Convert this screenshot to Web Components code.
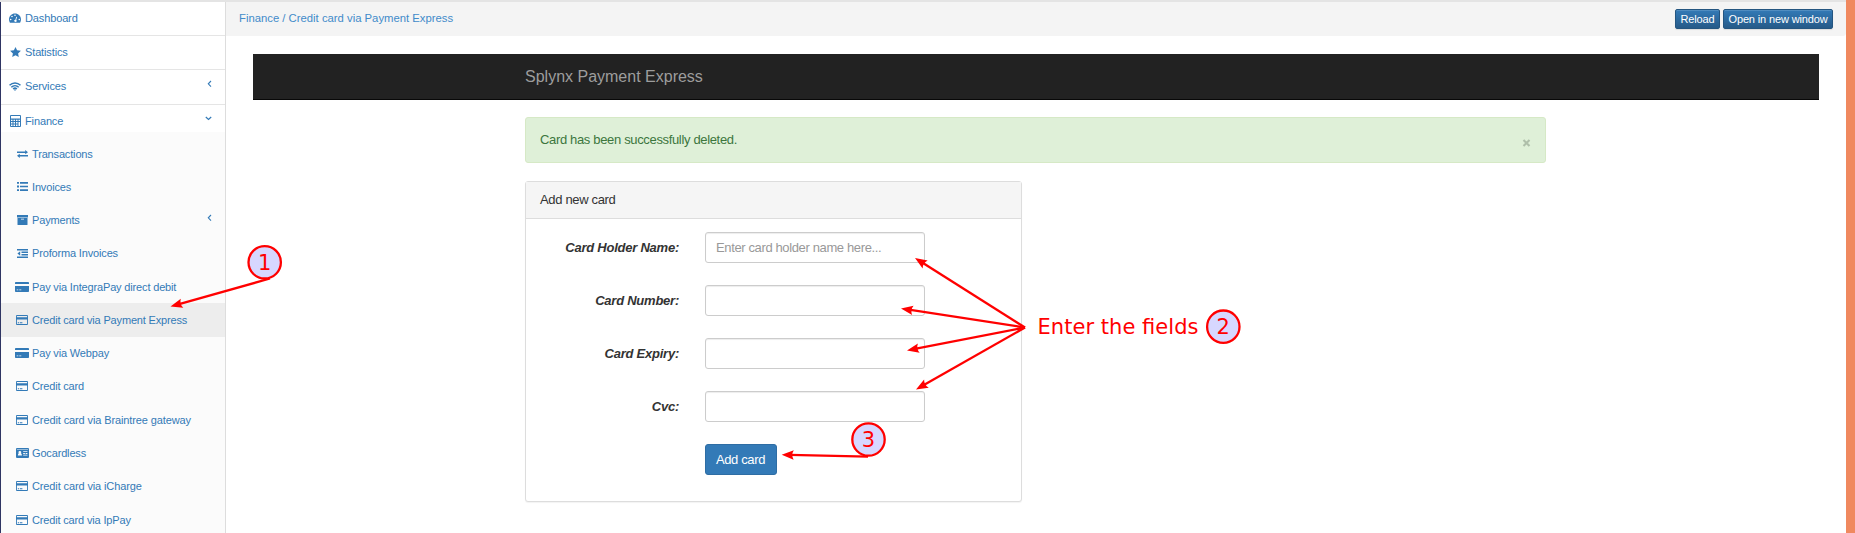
<!DOCTYPE html>
<html lang="en">
<head>
<meta charset="utf-8">
<title>Credit card via Payment Express</title>
<style>
html,body{margin:0;height:100%;overflow:hidden;background:#fff}
body{font-family:"Liberation Sans",Arial,sans-serif;font-size:13px;color:#333}
</style>
</head>
<body>
<portal-app></portal-app>
<script>
const define=(name,html,setup)=>customElements.define(name,class extends HTMLElement{
  connectedCallback(){
    if(this.shadowRoot)return;
    const t=document.createElement('template');
    t.innerHTML=html;
    this.attachShadow({mode:'open'}).append(t.content.cloneNode(true));
    if(setup)setup(this,this.shadowRoot);
  }
});

const icons={
  dashboard:[12,10,'<path fill-rule="evenodd" d="M6 .6C2.700.6 0 3.200 0 6.500c0 1 .3 2.100.8 3 .1.200.2.200.4.200h9.600c.2 0 .3 0 .4-.2.500-.9.8-2 .8-3C12 3.200 9.300.6 6 .6zM6 1.500a.8.8 0 1 1 0 1.600.8.8 0 0 1 0-1.600zM3 2.700a.8.8 0 1 1 0 1.600.8.8 0 0 1 0-1.600zM1.700 5.700a.8.8 0 1 1 0 1.600.8.8 0 0 1 0-1.600zM10.300 5.700a.8.8 0 1 1 0 1.600.8.8 0 0 1 0-1.600zM7.300 3.700l.8.2-.9 3c.5.300.7.8.5 1.300-.5 1.300-2.700.9-2.500-.6.1-.5.500-.9 1.200-.9z"/>'],
  star:[11,10,'<path d="M5.500 0l1.600 3.300 3.800.5-2.800 2.600.7 3.600-3.300-1.700-3.300 1.700.7-3.600L.1 3.800l3.800-.5z"/>'],
  wifi:[12,9,'<g fill="none" stroke="currentColor" stroke-width="1.500"><path d="M.5 3.300C3.700.2 8.300.2 11.500 3.300M2.300 5.200c2.100-2 5.300-2 7.400 0M4.100 7c1.100-1 2.700-1 3.800 0"/></g><path d="M4.800 7.600h2.400L6 9z"/>'],
  calc:[11,12,'<path fill-rule="evenodd" d="M1 0h9a1 1 0 0 1 1 1v10a1 1 0 0 1-1 1H1a1 1 0 0 1-1-1V1a1 1 0 0 1 1-1zM1 1v2.500h9V1zM1 4.700v1.300h1.500V4.700zm2.500 0v1.300H5V4.700zm2.500 0v1.300h1.500V4.700zm2.500 0v1.300H10V4.700zM1 7v1.500h1.500V7zm2.500 0v1.500H5V7zM6 7v1.500h1.500V7zM1 9.500V11h1.500V9.500zm2.500 0V11H5V9.500zm2.500 0V11h1.500V9.500zM8.500 7v4H10V7z"/>'],
  exchange:[11,8,'<path d="M0 1.400h8.200V0L11 2.200 8.200 4.300V2.900H0zM11 5.100H2.800V3.700L0 5.800 2.800 8V6.600H11z"/>'],
  list:[11,9,'<path d="M0 0h2v1.800H0zM0 3.600h2v1.800H0zM0 7.200h2V9H0zM3 .1h8v1.600H3zM3 3.700h8v1.600H3zM3 7.300h8v1.600H3z"/>'],
  archive:[11,10,'<path fill-rule="evenodd" d="M0 0h11v2.500H0zM.5 3h10v6.500a.5.5 0 0 1-.5.500H1a.5.5 0 0 1-.5-.5zM4 3.800v.8h3v-.8z"/>'],
  outdent:[11,9,'<path d="M0 0h11v1.400H0zM4.500 2.500H11v1.400H4.500zM4.500 5.100H11v1.400H4.500zM0 7.600h11V9H0zM3.200 2.200v4.600L.4 4.500z"/>'],
  cardfull:[14,10,'<path fill-rule="evenodd" d="M.8 0h12.400a.8.8 0 0 1 .8.8V2H0V.8A.8.8 0 0 1 .8 0zM0 4h14v5.200a.8.8 0 0 1-.8.8H.8a.8.8 0 0 1-.8-.8zM1.700 7.500v.8h1.600v-.8zm2.600 0v.8h2v-.8z"/>'],
  card:[12,10,'<path fill-rule="evenodd" d="M1 0h10a1 1 0 0 1 1 1v8a1 1 0 0 1-1 1H1a1 1 0 0 1-1-1V1a1 1 0 0 1 1-1zM.9.9v1.400h10.200V.9zM.9 4.600v4.500h10.200V4.600zM1.800 7.300h1.400v.9H1.800zm2.200 0h2.400v.9H4z"/>'],
  idcard:[13,10,'<path fill-rule="evenodd" d="M1 0h11a1 1 0 0 1 1 1v8a1 1 0 0 1-1 1H1a1 1 0 0 1-1-1V1a1 1 0 0 1 1-1zM.9.900v.5h11.200V.9zM3.800 3a1.300 1.300 0 0 0-.9 2.300c-.7.200-1 1-1 2.200h4c0-1.200-.4-2-1.100-2.200A1.300 1.300 0 0 0 3.800 3zM7.200 3.200v.9h4.200v-.9zM7.200 5v.9h1.700V5zm2.400 0v.9h1.800V5zM7.200 6.700v.8h4.200v-.8z"/>'],
  left:[5,8,'<path d="M4 1L1.300 3.800 4 6.600" fill="none" stroke="currentColor" stroke-width="1.100"/>'],
  down:[7,5,'<path d="M.8 1l2.700 2.500L6.200 1" fill="none" stroke="currentColor" stroke-width="1.200"/>']
};
define('ui-icon','<style>:host{display:block;line-height:0;flex:none}svg{display:block;fill:currentColor}</style>',(el,r)=>{
  const [w,h,body]=icons[el.getAttribute('name')];
  r.innerHTML+=`<svg width="${w}" height="${h}" viewBox="0 0 ${w} ${h}">${body}</svg>`;
});

define('nav-item',`<style>
:host{display:flex;align-items:center;box-sizing:border-box;height:34px;padding:0 13px 2px 6px;color:#337ab7;font-size:11px;letter-spacing:-.13px;border-bottom:1px solid #e5e5e5;white-space:nowrap}
:host([sub]){height:33.28px;border:0;padding:0 13px 0 13px;letter-spacing:-.16px}
:host([last]){border:0}
:host([active]){background:#ededed}
.i{width:16px;display:flex;justify-content:center;margin-right:2px}
.t{flex:1}
.c{margin-top:-5px}
</style><span class="i"></span><span class="t"><slot></slot></span><span class="c"></span>`,(el,r)=>{
  r.querySelector('.i').innerHTML=`<ui-icon name="${el.getAttribute('icon')}"></ui-icon>`;
  const a=el.getAttribute('arrow');
  if(a)r.querySelector('.c').innerHTML=`<ui-icon name="${a}"></ui-icon>`;
});

define('side-menu',`<style>
:host{display:block;box-sizing:border-box;width:226px;height:100%;border-left:1px solid #2f3563;border-right:1px solid #ddd;background:#fff;overflow:hidden}
.sub{background:#fbfbfb;padding-top:5px;box-sizing:border-box;height:402px}
</style>
<nav-item icon="dashboard">Dashboard</nav-item>
<nav-item icon="star">Statistics</nav-item>
<nav-item icon="wifi" arrow="left" style="height:35px">Services</nav-item>
<nav-item icon="calc" arrow="down" last style="height:27px;padding-top:6px">Finance</nav-item>
<div class="sub">
<nav-item sub icon="exchange">Transactions</nav-item>
<nav-item sub icon="list">Invoices</nav-item>
<nav-item sub icon="archive" arrow="left">Payments</nav-item>
<nav-item sub icon="outdent">Proforma Invoices</nav-item>
<nav-item sub icon="cardfull">Pay via IntegraPay direct debit</nav-item>
<nav-item sub icon="card" active>Credit card via Payment Express</nav-item>
<nav-item sub icon="cardfull">Pay via Webpay</nav-item>
<nav-item sub icon="card">Credit card</nav-item>
<nav-item sub icon="card" style="letter-spacing:-.11px">Credit card via Braintree gateway</nav-item>
<nav-item sub icon="idcard">Gocardless</nav-item>
<nav-item sub icon="card" style="letter-spacing:-.12px">Credit card via iCharge</nav-item>
<nav-item sub icon="card">Credit card via IpPay</nav-item>
</div>`);

define('tool-button',`<style>
:host{display:flex;align-items:center;justify-content:center;box-sizing:border-box;height:20px;border:1px solid #245580;border-radius:2px;background:linear-gradient(#337ab7,#265a88);box-shadow:inset 0 1px 0 rgba(255,255,255,.15),0 1px 1px rgba(0,0,0,.1);color:#fff;font-size:11px;letter-spacing:-.14px;white-space:nowrap}
</style><slot></slot>`);

define('top-bar',`<style>
:host{display:flex;align-items:center;box-sizing:border-box;height:34px;padding:0 13px 2px;background:#f4f4f4;color:#428bca;font-size:11.300px;border-bottom-right-radius:3px}
span{flex:1}
tool-button+tool-button{margin-left:3px}
div{display:flex;padding-top:2px}
</style><span>Finance / Credit card via Payment Express</span>
<div><tool-button style="width:45px">Reload</tool-button><tool-button style="width:110px">Open in new window</tool-button></div>`);

define('brand-bar',`<style>
:host{display:flex;align-items:center;box-sizing:border-box;height:46px;padding-left:272px;background:#222;border-bottom:1px solid #080808;color:#9d9d9d;font-size:16px}
</style><slot></slot>`);

define('alert-box',`<style>
:host{display:flex;align-items:center;justify-content:space-between;box-sizing:border-box;height:46px;padding:0 14px;border:1px solid #d6e9c6;border-radius:3px;background:#dff0d8;color:#3c763d;letter-spacing:-.34px}
span{padding-bottom:2px}
svg{margin-top:5px}
</style><span><slot></slot></span><svg width="9" height="8" viewBox="0 0 9 8"><path d="M1.500 1l6 6M7.500 1l-6 6" stroke="#afbfaa" stroke-width="2.100"/></svg>`);

define('form-row',`<style>
:host{display:flex;align-items:center;height:31px;margin-bottom:22px}
label{width:153px;text-align:right;font-weight:bold;font-style:italic;letter-spacing:-.24px;margin-right:26px}
input{box-sizing:border-box;width:220px;height:31px;margin:0;padding:0 10px;border:1px solid #ccc;border-radius:3px;background:#fff;box-shadow:inset 0 1px 1px rgba(0,0,0,.075);font:13px "Liberation Sans",Arial,sans-serif;letter-spacing:-.37px}
input::placeholder{color:#999;opacity:1}
</style><label></label><input>`,(el,r)=>{
  r.querySelector('label').textContent=el.getAttribute('label');
  r.querySelector('input').placeholder=el.getAttribute('hint')||'';
});

define('card-panel',`<style>
:host{display:block;box-sizing:border-box;width:497px;height:321px;border:1px solid #ddd;border-radius:3px;background:#fff;box-shadow:0 1px 1px rgba(0,0,0,.05)}
header{display:flex;align-items:center;box-sizing:border-box;height:37px;padding:0 0 2px 14px;background:#f5f5f5;border-bottom:1px solid #ddd;letter-spacing:-.34px}
form{padding:13px 0 0}
button{display:block;box-sizing:border-box;width:72px;height:31px;margin-left:179px;padding:0 1px 1px 0;border:1px solid #2e6da4;border-radius:3px;background:#337ab7;color:#fff;font:13px "Liberation Sans",Arial,sans-serif;letter-spacing:-.35px}
</style><header>Add new card</header>
<form>
<form-row label="Card Holder Name:" hint="Enter card holder name here..."></form-row>
<form-row label="Card Number:"></form-row>
<form-row label="Card Expiry:"></form-row>
<form-row label="Cvc:"></form-row>
<button type="button">Add card</button>
</form>`);

/* Tutorial callouts that float over the page */
define('callout-layer',`<style>
:host{position:absolute;left:0;top:0;pointer-events:none}
svg{display:block}
text{font-family:"DejaVu Sans",sans-serif;font-size:21px;fill:#f00}
circle{fill:#d7d7ff;stroke:#f00;stroke-width:2.300}
line{stroke:#f00;stroke-width:2.300}
</style><svg width="1855" height="533"></svg>`,(el,r)=>{
  const arrow=(x1,y1,x2,y2)=>{
    const a=Math.atan2(y2-y1,x2-x1);
    return `<line x1="${x1}" y1="${y1}" x2="${x2-8*Math.cos(a)}" y2="${y2-8*Math.sin(a)}"/><path fill="#f00" transform="translate(${x2} ${y2}) rotate(${a*180/Math.PI})" d="M0 0L-12 4.700Q-9.200 0-12-4.700z"/>`;
  };
  const badge=(x,y,n)=>`<circle cx="${x}" cy="${y}" r="16.200"/><text x="${x}" y="${y+7.700}" text-anchor="middle">${n}</text>`;
  r.querySelector('svg').innerHTML=
    badge(264.700,262.300,1)+badge(1223.300,326.700,2)+badge(868.500,439.500,3)+
    arrow(270,278.500,170.500,306.500)+
    arrow(1025,327.500,915,258)+arrow(1025,327.500,901,308.500)+arrow(1025,327.500,907,350.500)+arrow(1025,327.500,916,389.500)+
    arrow(868,456.700,781.700,454.700)+
    '<text x="1037.500" y="334" textLength="161" lengthAdjust="spacing">Enter the fields</text>';
});

define('portal-app',`<style>
:host{display:grid;grid-template-rows:2px 531px;width:1855px;height:533px;position:relative;overflow:hidden}
.edge{background:#f8f8f8;border-bottom:1px solid #e0e0e0;box-sizing:border-box;margin-right:9px;border-left:1px solid #2f3563}
.body{display:flex;border-right:9px solid #f0895f;margin-top:-2px;padding-top:2px;box-sizing:border-box;height:533px;background:linear-gradient(#e4e4e4,#e4e4e4) 0 0/100% 2px no-repeat}
main{flex:1;min-width:0}
.frame{padding:18px 27px 0}
.in{margin:17px 273px 0 272px}
card-panel{margin-top:18px}
</style>
<div class="edge"></div>
<div class="body"><side-menu></side-menu>
<main><top-bar></top-bar><div class="frame"><brand-bar>Splynx Payment Express</brand-bar>
<div class="in"><alert-box>Card has been successfully deleted.</alert-box><card-panel></card-panel></div></div></main></div>
<callout-layer></callout-layer>`);
</script>
</body>
</html>
